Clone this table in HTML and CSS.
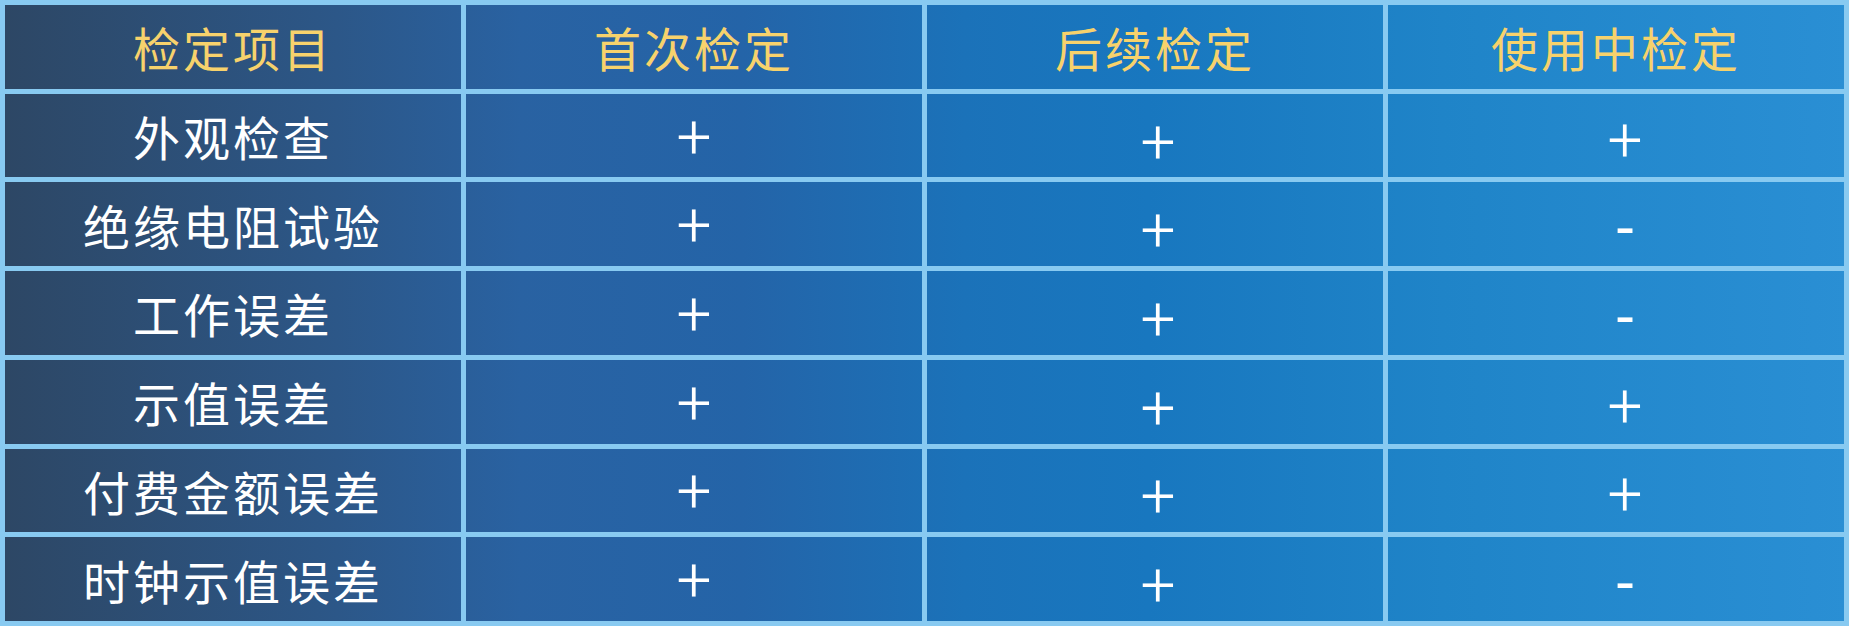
FILE: index.html
```html
<!DOCTYPE html>
<html lang="zh-CN">
<head>
<meta charset="utf-8">
<title>检定项目</title>
<link rel="stylesheet" href="styles.css">
</head>
<body>
<div class="sheet">
  <div class="cell head c1">检定项目</div>
  <div class="cell head c2">首次检定</div>
  <div class="cell head c3">后续检定</div>
  <div class="cell head c4">使用中检定</div>

  <div class="cell name c1">外观检查</div>
  <div class="cell mark c2">+</div>
  <div class="cell mark c3">+</div>
  <div class="cell mark c4">+</div>

  <div class="cell name c1">绝缘电阻试验</div>
  <div class="cell mark c2">+</div>
  <div class="cell mark c3">+</div>
  <div class="cell mark dash c4">-</div>

  <div class="cell name c1">工作误差</div>
  <div class="cell mark c2">+</div>
  <div class="cell mark c3">+</div>
  <div class="cell mark dash c4">-</div>

  <div class="cell name c1">示值误差</div>
  <div class="cell mark c2">+</div>
  <div class="cell mark c3">+</div>
  <div class="cell mark c4">+</div>

  <div class="cell name c1">付费金额误差</div>
  <div class="cell mark c2">+</div>
  <div class="cell mark c3">+</div>
  <div class="cell mark c4">+</div>

  <div class="cell name c1">时钟示值误差</div>
  <div class="cell mark c2">+</div>
  <div class="cell mark c3">+</div>
  <div class="cell mark dash c4">-</div>
</div>
</body>
</html>
```

FILE: styles.css
```css
html, body {
  margin: 0;
  padding: 0;
  background: #2a6fae;
}

.sheet {
  width: 1849px;
  height: 626px;
  box-sizing: border-box;
  display: grid;
  grid-template-columns: repeat(4, 1fr);
  grid-template-rows: repeat(7, 1fr);
  border-top: 5px solid #88caf1;
  border-left: 5px solid #88caf1;
  background: linear-gradient(90deg,
    #2d4765 0%,
    #2c5788 18%,
    #2962a2 28%,
    #2464a8 40%,
    #1b72b9 52%,
    #1877bf 62%,
    #1f84c8 78%,
    #2a8fd4 100%);
  font-family: "Noto Sans CJK SC", "Noto Sans", sans-serif;
}

.cell {
  border-right: 5px solid #88caf1;
  border-bottom: 5px solid #88caf1;
  display: flex;
  align-items: center;
  justify-content: center;
  color: #ffffff;
  font-size: 47px;
  font-weight: 400;
  letter-spacing: 3px;
  line-height: 1;
}

.head {
  color: #f7d26c;
}

.mark {
  font-family: Roboto, "Liberation Sans", sans-serif;
  font-size: 62px;
  font-weight: 300;
  letter-spacing: 0;
}

.mark.c2 {
  padding-top: 2px;
}

.mark.c3 {
  padding-top: 12px;
  padding-left: 6px;
}

.mark.c4 {
  padding-top: 8px;
  padding-left: 18px;
}

.mark.dash {
  font-weight: 400;
}
```
